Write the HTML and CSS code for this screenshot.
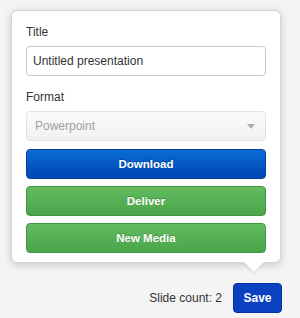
FILE: index.html
```html
<!DOCTYPE html>
<html lang="en">
<head>
<meta charset="UTF-8" />
<meta name="viewport" content="width=device-width, initial-scale=1" />
<title>Export</title>
<link rel="stylesheet" href="styles.css">
</head>
<body>

<div class="popover">
  <label class="field-label" for="title">Title</label>
  <input class="text-input" id="title" type="text" value="Untitled presentation" />

  <label class="field-label format-label">Format</label>
  <div class="select-box">
    <span>Powerpoint</span>
    <span class="caret"></span>
  </div>

  <div class="actions">
    <button class="btn btn-blue">Download</button>
    <button class="btn btn-green">Deliver</button>
    <button class="btn btn-green">New Media</button>
  </div>
</div>

<div class="footer">
  <span class="slide-count">Slide count: 2</span>
  <button class="save">Save</button>
</div>

</body>
</html>
```

FILE: styles.css
```css
body {
  margin: 0; background: #f4f4f4;
  font-family: "Liberation Sans", Arial, sans-serif; color: #333;
  width: 300px; height: 318px;
}
.popover {
  position: relative;
  margin: 10px 0 0 11px; width: 240px;
  padding: 12px 14px 9px 14px;
  background: #fff; border: 1px solid #d4d4d4; border-radius: 6px;
  box-shadow: 0 2px 8px rgba(0,0,0,0.18);
  display: flex; flex-direction: column;
}
/* little arrow pointing down at Save */
.popover::after {
  content: ""; position: absolute; bottom: -10px; right: 16px;
  border-left: 10px solid transparent; border-right: 10px solid transparent;
  border-top: 10px solid #fff;
  filter: drop-shadow(0 2px 1px rgba(0,0,0,0.08));
}
.field-label { font-size: 12px; line-height: 18px; color: #333; margin-bottom: 5px; }
.format-label { margin-top: 12px; }
.text-input {
  box-sizing: border-box; height: 30px; width: 100%;
  border: 1px solid #c8c8c8; border-radius: 4px; padding: 0 6px;
  font-family: inherit; font-size: 12px; color: #333; outline: none;
}
.select-box {
  box-sizing: border-box; height: 30px;
  display: flex; align-items: center; justify-content: space-between;
  padding: 0 10px 0 8px; border: 1px solid #e2e2e2; border-radius: 4px;
  background: linear-gradient(#fbfbfb, #f1f1f1);
  font-size: 12px; color: #a0a0a0;
}
.caret {
  width: 0; height: 0;
  border-left: 4px solid transparent; border-right: 4px solid transparent;
  border-top: 5px solid #b0b0b0;
}
.actions { display: flex; flex-direction: column; gap: 7px; margin-top: 8px; }
.btn {
  height: 30px; border-radius: 4px; color: #fff;
  font-family: inherit; font-weight: bold; font-size: 11.5px;
  text-shadow: 0 -1px 0 rgba(0,0,0,0.2); cursor: pointer;
}
.btn-blue { background: linear-gradient(#0a6cd6, #0045b3); border: 1px solid #003f9e; }
.btn-green { background: linear-gradient(#63bc60, #4aa44a); border: 1px solid #429442; }
.footer {
  display: flex; justify-content: flex-end; align-items: center; gap: 11px;
  margin-top: 20px; padding-right: 18px;
}
.slide-count { font-size: 12px; color: #333; }
.save {
  width: 49px; height: 30px; border-radius: 4px;
  background: #0b40c0; border: 1px solid #06339f; color: #fff;
  font-family: inherit; font-weight: bold; font-size: 12px;
}
```
